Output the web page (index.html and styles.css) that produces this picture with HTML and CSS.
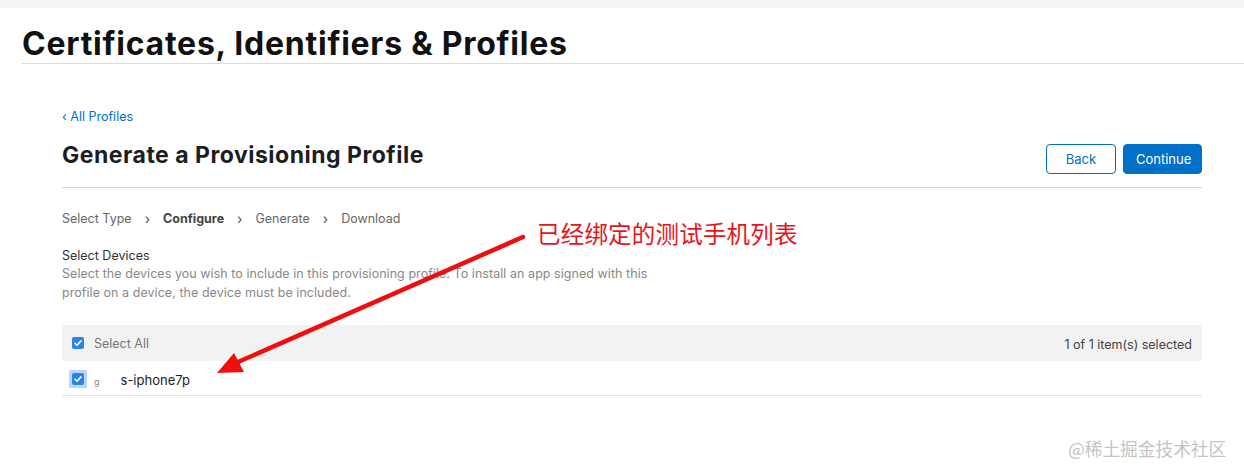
FILE: index.html
```html
<!DOCTYPE html>
<html>
<head>
<meta charset="utf-8">
<link rel="stylesheet" href="styles.css">
</head>
<body>
<div class="topband"></div>
<header class="page-head">
  <h1 class="page-title">Certificates, Identifiers &amp; Profiles</h1>
</header>
<main class="content">
  <a class="back-link" href="#">‹ All Profiles</a>
  <div class="title-row">
    <h2 class="section-title">Generate a Provisioning Profile</h2>
    <div class="actions">
      <button class="btn btn-secondary">Back</button>
      <button class="btn btn-primary">Continue</button>
    </div>
  </div>
  <nav class="steps">
    <span class="step">Select Type</span>
    <span class="chev">›</span>
    <span class="step active">Configure</span>
    <span class="chev">›</span>
    <span class="step">Generate</span>
    <span class="chev">›</span>
    <span class="step">Download</span>
  </nav>
  <div class="devices-intro">
    <div class="label">Select Devices</div>
    <p class="desc">Select the devices you wish to include in this provisioning profile. To install an app signed with this profile on a device, the device must be included.</p>
  </div>
  <div class="table">
    <div class="table-head">
      <label class="check-label">
        <span class="checkbox"><svg viewBox="0 0 12 12" width="12" height="12"><path d="M3 6.2 L5.1 8.3 L9 3.9" fill="none" stroke="#fff" stroke-width="1.6" stroke-linecap="round" stroke-linejoin="round"/></svg></span>
        <span class="head-text">Select All</span>
      </label>
      <span class="count">1 of 1 item(s) selected</span>
    </div>
    <div class="table-row">
      <span class="check-wrap"><span class="checkbox"><svg viewBox="0 0 12 12" width="12" height="12"><path d="M3 6.2 L5.1 8.3 L9 3.9" fill="none" stroke="#fff" stroke-width="1.6" stroke-linecap="round" stroke-linejoin="round"/></svg></span></span>
      <span class="device-name"><span class="masked">ɡ</span><span class="gap"></span>s-iphone7p</span>
    </div>
  </div>
</main>
<div class="annotation">已经绑定的测试手机列表</div>
<svg class="arrow" width="1244" height="474" viewBox="0 0 1244 474">
  <line x1="523" y1="237" x2="238" y2="362" stroke="#f20d0d" stroke-width="4.5" stroke-linecap="round"/>
  <polygon points="217,373 234,353 244,372" fill="#f20d0d"/>
</svg>
<div class="watermark">@稀土掘金技术社区</div>
</body>
</html>
```
FILE: styles.css
```css
* { box-sizing: border-box; }
html, body { margin: 0; padding: 0; }
body {
  width: 1244px;
  height: 474px;
  overflow: hidden;
  background: #fff;
  font-family: Inter, "Noto Sans", "Noto Sans CJK SC", sans-serif;
  color: #1d1d1f;
  position: relative;
}
.topband { height: 8px; background: #f5f5f7; }
.page-head {
  margin-left: 22px;
  border-bottom: 1px solid #d9d9d9;
  padding-top: 22px;
  height: 56px;
}
.page-title {
  margin: 0;
  font-size: 32px;
  line-height: 28px;
  font-weight: 700;
  letter-spacing: 0.75px;
  color: #111;
}
.content {
  margin-left: 62px;
  width: 1140px;
  padding-top: 45px;
}
.back-link {
  display: block;
  font-size: 12.5px;
  line-height: 16px;
  color: #0070c9;
  text-decoration: none;
}
.title-row {
  display: flex;
  justify-content: space-between;
  align-items: flex-end;
  border-bottom: 1px solid #d6d6d6;
  padding-top: 19px;
  padding-bottom: 13px;
}
.section-title {
  margin: -4px 0 0;
  font-size: 23px;
  line-height: 30px;
  font-weight: 700;
  letter-spacing: 0.5px;
  color: #1d1d1f;
  align-self: flex-start;
}
.actions { display: flex; gap: 7px; margin-right: 0; }
.btn {
  font-family: inherit;
  font-size: 13px;
  height: 30px;
  border-radius: 4px;
  padding: 0 12px;
  cursor: pointer;
}
.btn-secondary {
  width: 70px;
  background: #fff;
  border: 1px solid #0070c9;
  color: #0070c9;
}
.btn-primary {
  width: 79px;
  background: #0070c9;
  border: 1px solid #0070c9;
  color: #fff;
}
.steps {
  display: flex;
  align-items: center;
  gap: 13px;
  font-size: 12.5px;
  color: #666;
  padding-top: 23px;
  line-height: 16px;
}
.step.active { font-weight: 700; color: #444; }
.chev { color: #555; font-size: 14px; }
.devices-intro { padding-top: 20px; }
.label { font-size: 12.5px; line-height: 17px; color: #333; }
.desc {
  margin: 0;
  width: 610px;
  font-size: 12.5px;
  line-height: 19px;
  letter-spacing: 0.05px;
  color: #888;
}
.table { margin-top: 23px; }
.table-head {
  height: 36px;
  background: #f2f2f2;
  display: flex;
  align-items: center;
  justify-content: space-between;
  padding: 0 10px 0 10px;
}
.check-label { display: flex; align-items: center; gap: 10px; }
.checkbox {
  width: 12px;
  height: 12px;
  border-radius: 2px;
  background: #2d83e6;
  display: inline-flex;
  align-items: center;
  justify-content: center;
}
.head-text { font-size: 12.5px; color: #777; }
.count { font-size: 12.5px; color: #444; padding-top: 3px; }
.table-row {
  height: 35px;
  border-bottom: 1px solid #e3e3e3;
  display: flex;
  align-items: center;
  padding-left: 7px;
  gap: 7px;
}
.check-wrap {
  width: 18px;
  height: 18px;
  background: #b7d7fb;
  display: inline-flex;
  align-items: center;
  justify-content: center;
  margin-top: 2px;
}
.device-name { font-size: 13px; color: #222; display: flex; align-items: baseline; padding-top: 4px; }
.masked { color: #888; font-size: 9px; }
.gap { display: inline-block; width: 21px; }
.annotation {
  position: absolute;
  left: 537px;
  top: 218px;
  font-family: "Noto Sans CJK SC", sans-serif;
  font-size: 23.5px;
  line-height: 30px;
  color: #e8141b;
  letter-spacing: 0.2px;
}
.arrow { position: absolute; left: 0; top: 0; pointer-events: none; }
.watermark {
  position: absolute;
  left: 1068px;
  top: 436px;
  font-family: "Noto Sans CJK SC", sans-serif;
  font-size: 17.7px;
  line-height: 24px;
  color: #c4c4c4;
}
```
